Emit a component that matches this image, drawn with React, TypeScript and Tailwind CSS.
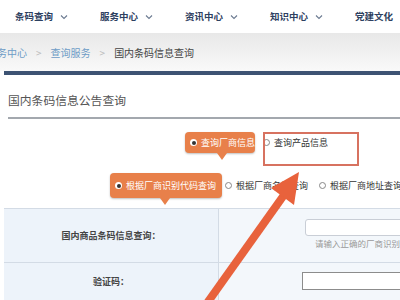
import React from 'react';

const font = { fontFamily: '"Noto Sans CJK SC", "Noto Sans", sans-serif' };

function Chevron() {
  return (
    <svg width="8" height="6" viewBox="0 0 8 6" className="ml-[7px]">
      <path d="M1 1.5l3 3 3-3" fill="none" stroke="#6b7a90" strokeWidth="1.1" />
    </svg>
  );
}

function Radio({ on }: { on?: boolean }) {
  if (on) {
    return (
      <span className="shrink-0 w-[7px] h-[7px] rounded-full bg-white flex items-center justify-center">
        <span className="w-[4px] h-[4px] rounded-full bg-[#333]" />
      </span>
    );
  }
  return <span className="shrink-0 w-[7px] h-[7px] rounded-full border border-[#888] bg-white" />;
}

function Tip({ label, w, h, arrowLeft }: { label: string; w: string; h: string; arrowLeft: string }) {
  return (
    <div className={`relative shrink-0 flex items-center gap-[4px] pl-[5px] whitespace-nowrap rounded-[4px] bg-[#e8804a] text-white text-[9px] shadow-[0_1px_2px_rgba(0,0,0,0.25)] ${w} ${h}`}>
      <Radio on />
      <span>{label}</span>
      <span
        className={`absolute top-full w-0 h-0 border-l-[5px] border-r-[5px] border-t-[7px] border-l-transparent border-r-transparent border-t-[#e8804a] ${arrowLeft}`}
      />
    </div>
  );
}

export default function App() {
  const nav = ['条码查询', '服务中心', '资讯中心', '知识中心'];

  return (
    <div className="relative w-[400px] h-[300px] overflow-hidden bg-white" style={font}>
      {/* top nav */}
      <div className="h-[33px] flex items-center pl-[15px] text-[9.5px] font-bold text-[#2d4060]">
        {nav.map((n) => (
          <div key={n} className="w-[85px] flex items-center">
            <span>{n}</span>
            <Chevron />
          </div>
        ))}
        <span>党建文化</span>
      </div>

      {/* breadcrumb, first crumb runs off the left edge */}
      <div className="h-[38px] flex items-center text-[10px] bg-gradient-to-b from-[#e8e8e8] to-[#f9f9f9] whitespace-nowrap overflow-hidden">
        <span className="ml-[-13px] text-[#6d9cc6]">服务中心</span>
        <span className="mx-[9px] text-[#bbb]">&gt;</span>
        <span className="text-[#6d9cc6]">查询服务</span>
        <span className="mx-[9px] text-[#bbb]">&gt;</span>
        <span className="text-[#444]">国内条码信息查询</span>
      </div>
      <div className="ml-[4px] h-[4px] bg-[#3d5373]" />

      {/* title */}
      <div className="pt-[16px] pl-[8px] text-[11.8px] leading-[18px] text-[#555]">国内条码信息公告查询</div>
      <div className="ml-[8px] mt-[8px] h-[2px] bg-[#a3a8ae]" />

      {/* query type */}
      <div className="mt-[13px] h-[21px] flex items-center pl-[185px] text-[9px] text-[#333] whitespace-nowrap">
        <Tip label="查询厂商信息" w="w-[70px]" h="h-[21px]" arrowLeft="left-[32px]" />
        <span className="ml-[8px] flex items-center gap-[4px]">
          <Radio />
          <span>查询产品信息</span>
        </span>
      </div>

      <div className="mt-[20px] h-[25px] flex items-center pl-[110px] text-[9px] text-[#333] whitespace-nowrap">
        <Tip label="根据厂商识别代码查询" w="w-[112px]" h="h-[25px]" arrowLeft="left-[50px]" />
        <span className="ml-[3px] shrink-0 flex items-center gap-[4px]">
          <Radio />
          <span>根据厂商名称查询</span>
        </span>
        <span className="ml-[11px] shrink-0 flex items-center gap-[4px]">
          <Radio />
          <span>根据厂商地址查询</span>
        </span>
      </div>

      {/* form table */}
      <div className="mt-[10px] ml-[4px] border-t border-[#d3dbe5] text-[9px] text-[#444]">
        <div className="flex h-[54px] border-b border-[#d3dbe5]">
          <div className="shrink-0 w-[215px] bg-[#edf3fa] border-r border-[#d3dbe5] flex items-center justify-center font-bold">
            国内商品条码信息查询：
          </div>
          <div className="flex-1 min-w-0 overflow-hidden bg-[#f3f7fb] pl-[86px] pt-[10px] whitespace-nowrap">
            <div className="w-[140px] h-[17px] bg-white border border-[#c9ced6] rounded-[3px]" />
            <div className="mt-[1px] pl-[10px] text-[8.5px] text-[#999]">请输入正确的厂商识别代码</div>
          </div>
        </div>
        <div className="flex h-[40px]">
          <div className="shrink-0 w-[215px] bg-[#edf3fa] border-r border-[#d3dbe5] flex items-center justify-center font-bold pb-[2px]">
            验证码：
          </div>
          <div className="flex-1 min-w-0 overflow-hidden bg-[#f3f7fb] pl-[83px] pt-[9px]">
            <div className="w-[140px] h-[18px] bg-white border border-[#8c8c8c]" />
          </div>
        </div>
      </div>

      {/* annotation box */}
      <div className="absolute left-[263px] top-[132px] w-[96px] h-[34px] border-2 border-[#d77260]" />

      {/* annotation arrow */}
      <svg className="absolute left-0 top-0 pointer-events-none" width="400" height="300" viewBox="0 0 400 300">
        <line x1="205" y1="306" x2="284" y2="195" stroke="#e8623c" strokeWidth="8" />
        <polygon points="299,172 271,188 294,205" fill="#e8623c" />
      </svg>
    </div>
  );
}
